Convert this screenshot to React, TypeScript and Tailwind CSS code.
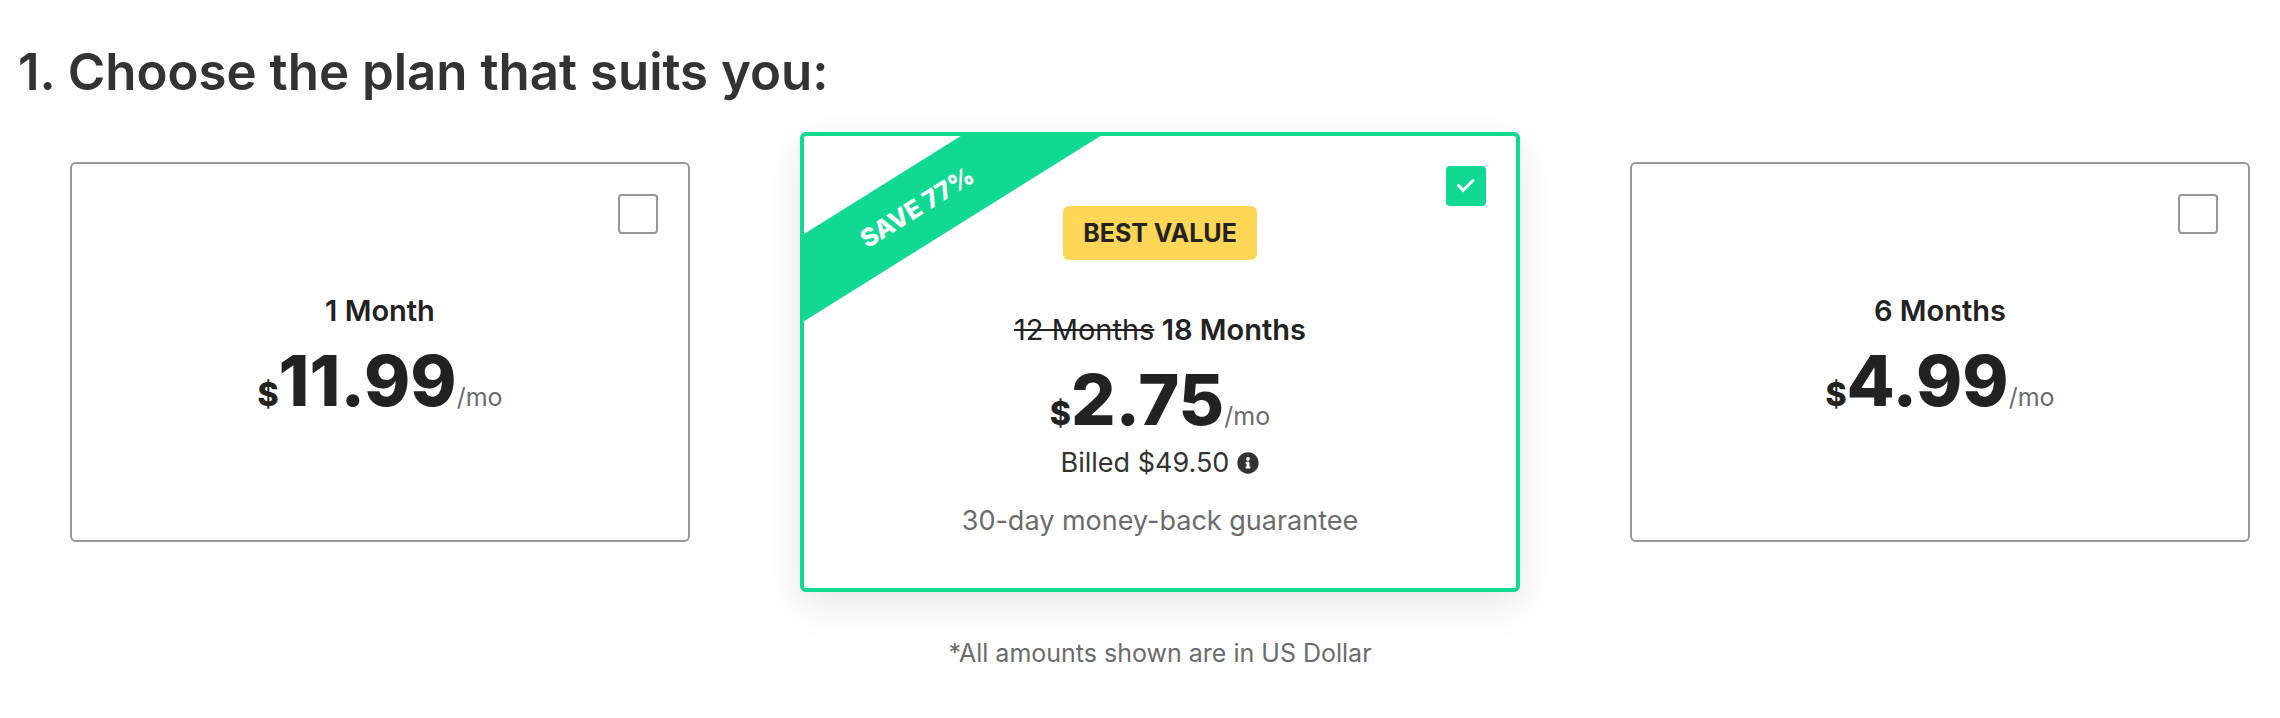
import React, { useState } from "react";
import { FaInfoCircle } from "react-icons/fa";

const plans = [
  { id: "1m", label: "1 Month", price: "11.99" },
  {
    id: "18m",
    label: "18 Months",
    oldLabel: "12 Months",
    price: "2.75",
    billed: "$49.50",
    save: "SAVE 77%",
    best: true,
  },
  { id: "6m", label: "6 Months", price: "4.99" },
];

const PlanCheckbox = ({ checked, onChange }) => (
  <span className="grid self-end w-10 h-10">
    <input
      type="checkbox"
      checked={checked}
      onChange={onChange}
      className="col-start-1 row-start-1 w-10 h-10 appearance-none rounded border-2 border-[#969696] bg-white checked:border-[#12d992] checked:bg-[#12d992] cursor-pointer"
    />
    {checked && (
      <svg
        viewBox="0 0 40 40"
        fill="none"
        className="col-start-1 row-start-1 w-10 h-10 pointer-events-none"
      >
        <path
          d="M12.5 19.5 L17.2 24.3 L27 14.5"
          stroke="white"
          strokeWidth="3"
          strokeLinecap="round"
        />
      </svg>
    )}
  </span>
);

const PlanCard = ({ plan, checked, onSelect }) => (
  <label
    className={
      plan.best
        ? "relative flex flex-col items-center overflow-hidden rounded-md border-4 border-[#12d992] bg-white p-[30px] pb-[49px] shadow-[0_12px_40px_rgba(0,0,0,0.1)] cursor-pointer"
        : "flex flex-col items-center mt-[30px] rounded-md border-2 border-[#969696] bg-white p-[30px] pb-[123px] cursor-pointer"
    }
  >
    {plan.save && (
      <span className="absolute -left-[107px] top-[34px] w-[440px] h-[74px] -rotate-32 bg-[#12d992] text-center text-[25px] leading-[74px] font-extrabold text-white">
        {plan.save}
      </span>
    )}
    <PlanCheckbox checked={checked} onChange={onSelect} />
    {plan.best && (
      <span className="rounded-md bg-[#ffd655] px-5 text-[25px] leading-[54px] font-bold">
        BEST VALUE
      </span>
    )}
    <span
      className={
        plan.best
          ? "mt-[52px] text-[29px] leading-9 font-semibold"
          : "mt-[59px] text-[29px] leading-9 font-semibold"
      }
    >
      {plan.oldLabel && (
        <>
          <s className="font-normal">{plan.oldLabel}</s>{" "}
        </>
      )}
      {plan.label}
    </span>
    <span className="mt-4 flex items-baseline h-[72px] leading-[72px]">
      <span className="text-[32px] font-extrabold">$</span>
      <span className="text-[70px] font-extrabold">{plan.price}</span>
      <span className="text-[25px] text-[#6b6b6b]">/mo</span>
    </span>
    {plan.billed && (
      <>
        <span className="mt-[9px] flex items-center gap-2 text-[27px] leading-9 text-[#333]">
          Billed {plan.billed}
          <FaInfoCircle size={22} />
        </span>
        <span className="mt-[22px] text-[27px] leading-9 text-[#6b6b6b]">
          30-day money-back guarantee
        </span>
      </>
    )}
  </label>
);

const App = () => {
  const [selected, setSelected] = useState("18m");

  return (
    <div className="min-h-screen bg-white pt-11 pb-12 font-[Inter,sans-serif] text-[#222]">
      <h2 className="px-[18px] text-[51px] leading-14 font-semibold text-[#333]">
        1. Choose the plan that suits you:
      </h2>
      <div className="mt-8 grid grid-cols-[31fr_36fr_31fr] items-start gap-[110px] pl-[70px] pr-[30px]">
        {plans.map((plan) => (
          <PlanCard
            key={plan.id}
            plan={plan}
            checked={selected === plan.id}
            onSelect={() => setSelected(plan.id)}
          />
        ))}
      </div>
      <p className="mt-[43px] pl-[70px] pr-[30px] text-center text-[25px] leading-9 text-[#6b6b6b]">
        *All amounts shown are in US Dollar
      </p>
    </div>
  );
};

export default App;
